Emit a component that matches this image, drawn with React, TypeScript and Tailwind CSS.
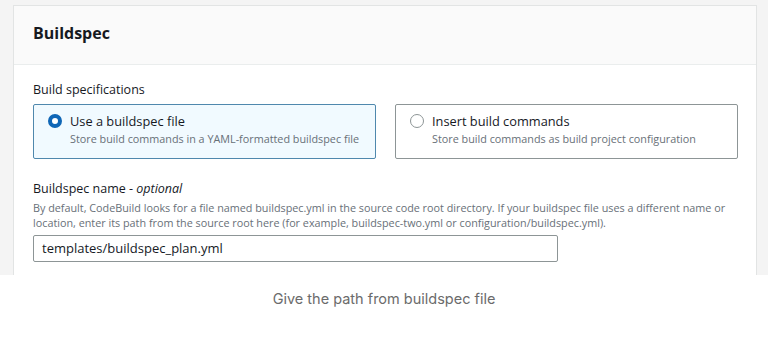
export default function App() {
  return (
    <div className="w-[768px] h-[339px] bg-white relative overflow-hidden" style={{ fontFamily: '"Open Sans", "Noto Sans", sans-serif' }}>
      <div className="h-[275px] bg-[#f4f4f4] pt-[5px] pl-[13px] pr-[11px]">
        <div className="h-full bg-white border-l border-r border-t border-[#e2e4e4] flex flex-col">
          {/* Header */}
          <div className="h-[59px] bg-[#fafafa] border-b border-[#eaeded] flex items-center pl-[19px] pb-[5px] shrink-0">
            <h2 className="text-[16px] font-bold text-[#16191f] leading-none">Buildspec</h2>
          </div>

          {/* Body */}
          <div className="pl-[19px] pr-[18px] pt-[17px] flex-1">
            <div className="text-[12.5px] text-[#16191f] leading-[16px]">Build specifications</div>

            <div className="flex gap-[19px] mt-[6px]">
              <div className="w-[343px] h-[55px] rounded-[2px] border border-[#4f88ad] bg-[#f1faff] flex items-start pl-[14px] pt-[8px] gap-[8px]">
                <span className="mt-[1px] w-[14px] h-[14px] rounded-full border-[4px] border-[#0f66b6] bg-white shrink-0" />
                <div>
                  <div className="text-[12.8px] text-[#16191f] leading-[17px]">Use a buildspec file</div>
                  <div className="text-[10.8px] text-[#687078] leading-[16px] mt-[1px]">Store build commands in a YAML-formatted buildspec file</div>
                </div>
              </div>
              <div className="w-[343px] h-[55px] rounded-[2px] border border-[#8d9596] bg-white flex items-start pl-[14px] pt-[8px] gap-[8px]">
                <span className="mt-[1px] w-[14px] h-[14px] rounded-full border border-[#8d9596] bg-white shrink-0" />
                <div>
                  <div className="text-[12.8px] text-[#16191f] leading-[17px]">Insert build commands</div>
                  <div className="text-[10.8px] text-[#687078] leading-[16px] mt-[1px]">Store build commands as build project configuration</div>
                </div>
              </div>
            </div>

            <div className="mt-[22px] text-[12.5px] text-[#16191f] leading-[16px]">
              Buildspec name - <span className="italic">optional</span>
            </div>
            <div className="text-[10.8px] text-[#687078] leading-[15px] mt-[3px]">
              By default, CodeBuild looks for a file named buildspec.yml in the source code root directory. If your buildspec file uses a different name or location, enter its path from the source root here (for example, buildspec-two.yml or configuration/buildspec.yml).
            </div>
            <div className="mt-[5px] w-[525px] h-[27px] border border-[#8d9596] rounded-[2px] flex items-center pl-[8px]">
              <span className="text-[13px] text-[#16191f]">templates/buildspec_plan.yml</span>
            </div>
          </div>
        </div>
      </div>

      <div className="text-center mt-[13px] text-[14.5px] text-[#6b6b6b]" style={{ fontFamily: 'Inter, "Liberation Sans", sans-serif' }}>
        Give the path from buildspec file
      </div>
    </div>
  )
}
